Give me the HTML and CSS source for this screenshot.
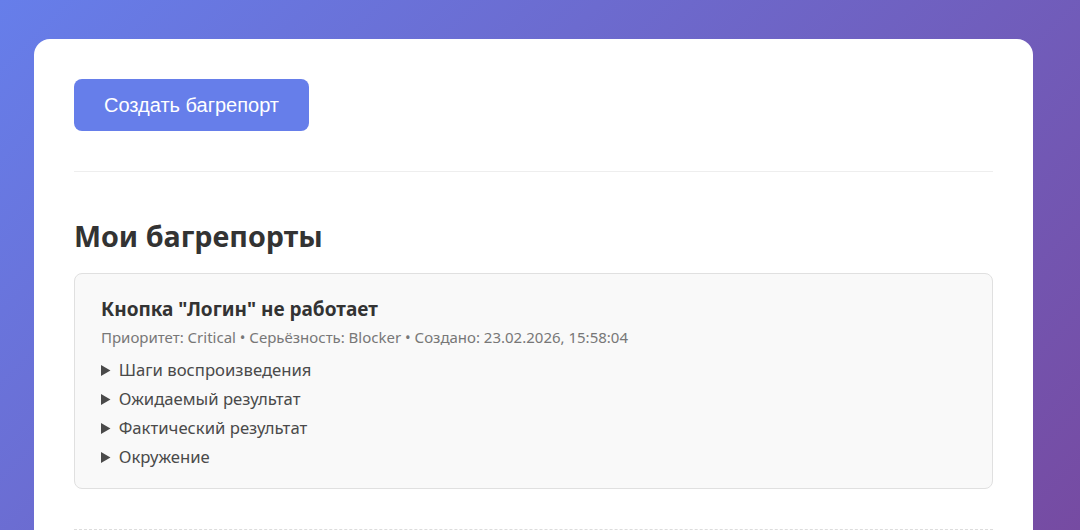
FILE: index.html
```html
<!DOCTYPE html>
<html lang="ru">
<head>
<meta charset="utf-8">
<title>Багрепорты</title>
<link rel="stylesheet" href="styles.css">
</head>
<body>
<div class="container">
  <div class="actions">
    <button class="btn-primary">Создать багрепорт</button>
  </div>
  <hr class="divider">
  <h2 class="section-title">Мои багрепорты</h2>
  <div class="report-list">
    <div class="report">
      <h3 class="report-title">Кнопка "Логин" не работает</h3>
      <div class="report-meta">Приоритет: Critical • Серьёзность: Blocker • Создано: 23.02.2026, 15:58:04</div>
      <details class="report-section"><summary>Шаги воспроизведения</summary><p>—</p></details>
      <details class="report-section"><summary>Ожидаемый результат</summary><p>—</p></details>
      <details class="report-section"><summary>Фактический результат</summary><p>—</p></details>
      <details class="report-section"><summary>Окружение</summary><p>—</p></details>
    </div>
  </div>
  <div class="dashed"></div>
</div>
</body>
</html>
```
FILE: styles.css
```css
html, body {
  margin: 0;
  height: 100%;
}
body {
  background: linear-gradient(135deg, #667eea 0%, #764ba2 100%);
  font-family: "Noto Sans", "Open Sans", sans-serif;
  color: #333;
  padding-top: 39px;
  box-sizing: border-box;
  overflow: hidden;
}
.container {
  margin-left: 34px;
  width: 999px;
  box-sizing: border-box;
  background: #fff;
  border-radius: 16px;
  padding: 40px 40px 40px;
  min-height: 600px;
}
.btn-primary {
  background: #667eea;
  color: #fff;
  border: none;
  border-radius: 8px;
  padding: 0 30px;
  height: 52px;
  font-family: "Liberation Sans", Arial, sans-serif;
  font-size: 20px;
  cursor: pointer;
}
.divider {
  border: none;
  border-top: 1px solid #eee;
  margin: 40px 0 46px;
}
.section-title {
  margin: 0 0 19px;
  font-size: 28.7px;
  line-height: 36px;
  font-weight: 700;
  color: #333;
}
.report {
  background: #f9f9f9;
  border: 1px solid #e0e0e0;
  border-radius: 8px;
  padding: 23px 26px 20px;
}
.report-title {
  margin: 0 0 6px;
  font-size: 19px;
  line-height: 24px;
  font-weight: 700;
  color: #333;
}
.report-meta {
  font-size: 15px;
  line-height: 20px;
  color: #777;
  margin-bottom: 12px;
}
.report-section {
  font-size: 16.7px;
  line-height: 22px;
  color: #4a4a4a;
  margin-bottom: 7px;
}
.report-section:last-child {
  margin-bottom: 0;
}
.report-section summary {
  cursor: pointer;
}
.dashed {
  margin-top: 40px;
  border-top: 1px dashed #ddd;
}
```
